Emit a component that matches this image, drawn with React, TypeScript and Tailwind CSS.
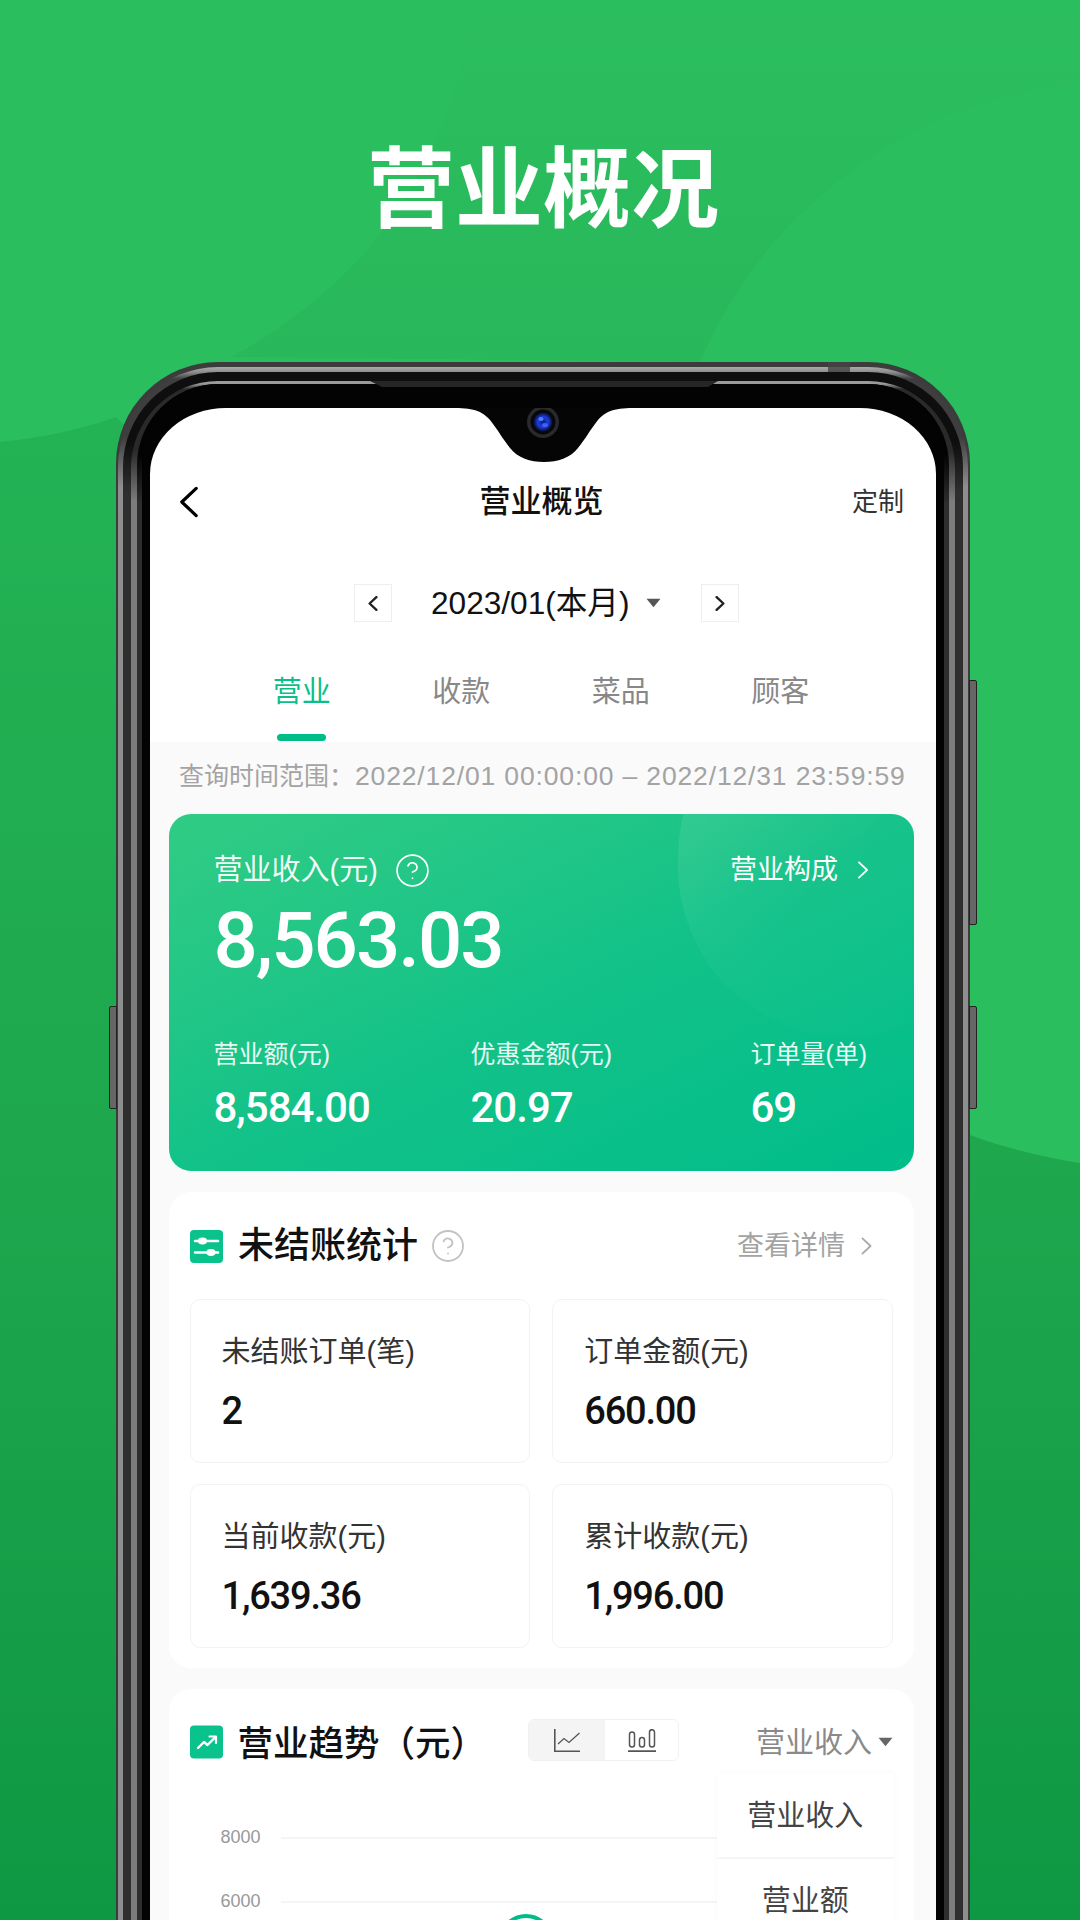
import React from "react";
import { CircleHelp } from "lucide-react";

const Chevron = ({ dir, className, weight = 2 }: { dir: "left" | "right"; className: string; weight?: number }) => (
  <svg viewBox="0 0 12 20" className={className} fill="none" stroke="currentColor" strokeLinecap="round" strokeLinejoin="round">
    <polyline points={dir === "left" ? "10.5,1.5 1.5,10 10.5,18.5" : "1.5,1.5 10.5,10 1.5,18.5"} strokeWidth={weight} />
  </svg>
);

const Caret = ({ className }: { className: string }) => (
  <svg viewBox="0 0 14 9" className={className} fill="currentColor">
    <path d="M0.5 0.5h13L7 8.5z" />
  </svg>
);

const SlidersIcon = () => (
  <svg viewBox="0 0 33 33" className="h-[33px] w-[33px] shrink-0">
    <rect width="33" height="33" rx="4" fill="#0ac28b" />
    <path d="M5 11h23M5 22.5h23" stroke="#fff" strokeWidth="2.6" strokeLinecap="round" />
    <ellipse cx="12.5" cy="11" rx="4.6" ry="3.4" fill="#fff" />
    <ellipse cx="21" cy="22.5" rx="4.6" ry="3.4" fill="#fff" />
  </svg>
);

const TrendIcon = () => (
  <svg viewBox="0 0 33 33" className="h-[34px] w-[33px] shrink-0">
    <rect width="33" height="33" rx="4" fill="#0ac28b" />
    <path d="M8 22.5l6-6 3.5 3L25 12" fill="none" stroke="#fff" strokeWidth="2.4" strokeLinecap="round" strokeLinejoin="round" />
    <path d="M19.5 11H26v6.5" fill="none" stroke="#fff" strokeWidth="2.2" strokeLinecap="round" strokeLinejoin="round" />
  </svg>
);

const LineChartIcon = () => (
  <svg viewBox="0 0 26 23" className="h-[23px] w-[26px]" fill="none" stroke="#555" strokeWidth="1.6">
    <path d="M0.8 0v22.2H26" />
    <path d="M4 15l6-5.5 5 4L25.5 4" strokeWidth="1.3" />
  </svg>
);

const BarChartIcon = () => (
  <svg viewBox="0 0 28 23" className="h-[23px] w-[28px]" fill="none" stroke="#555" strokeWidth="1.5">
    <rect x="1.5" y="3" width="5" height="15" rx="2.5" />
    <rect x="11.5" y="8.5" width="5" height="9.5" rx="2.5" />
    <rect x="21.5" y="0.7" width="5" height="17.3" rx="2.5" />
    <path d="M0 22.2h28" strokeWidth="1.7" />
  </svg>
);

const Background = () => (
  <svg viewBox="0 0 1080 1920" className="absolute inset-0 h-[1920px] w-[1080px]">
    <defs>
      <linearGradient id="bgDark" x1="0" y1="400" x2="0" y2="1920" gradientUnits="userSpaceOnUse">
        <stop offset="0" stopColor="#23b355" />
        <stop offset="0.5" stopColor="#1ea74d" />
        <stop offset="1" stopColor="#0f9843" />
      </linearGradient>
      <linearGradient id="bgBand" x1="0" y1="0" x2="0" y2="420" gradientUnits="userSpaceOnUse">
        <stop offset="0" stopColor="#0a6b35" stopOpacity="0" />
        <stop offset="1" stopColor="#0a6b35" stopOpacity="0.09" />
      </linearGradient>
    </defs>
    <rect width="1080" height="1920" fill="url(#bgDark)" />
    <path d="M0 0H1080V1163C1040 1157 1000 1146 970 1135L500 800L116 417C80 430 40 438 0 442Z" fill="#2bbe5e" />
    <path d="M472 0C458 110 420 190 360 258C320 300 280 330 231 357L700 362C740 270 800 200 895 143C950 110 1020 90 1080 85V0Z" fill="url(#bgBand)" />
  </svg>
);

const Notch = () => (
  <svg viewBox="0 0 786 70" className="absolute left-0 top-0 h-[70px] w-[786px]">
    <defs>
      <radialGradient id="lens">
        <stop offset="0" stopColor="#0b1a80" />
        <stop offset="0.55" stopColor="#1b3fe0" />
        <stop offset="1" stopColor="#070b2c" />
      </radialGradient>
    </defs>
    <path d="M305 0C325 0 333 4 340 12C348 22 352 30 360 40C368 50 380 54 394 54C408 54 420 50 428 40C436 30 440 22 448 12C455 4 463 0 483 0Z" fill="#050505" />
    <circle cx="393" cy="14" r="16" fill="#2a2a2c" />
    <circle cx="393" cy="14" r="12.5" fill="#08080a" />
    <circle cx="393" cy="14" r="9.5" fill="url(#lens)" />
    <ellipse cx="391" cy="11" rx="2.6" ry="2" fill="#4f7dff" />
    <ellipse cx="395" cy="17" rx="3" ry="2" fill="#3a62f5" />
  </svg>
);

const PhoneChrome = () => (
  <>
    <div className="absolute left-[-7px] top-[644px] h-[103px] w-[8px] rounded-l-[2px] border border-[#222] bg-[#666]" />
    <div className="absolute right-[-7px] top-[318px] h-[245px] w-[8px] rounded-r-[2px] border border-[#222] bg-[#666]" />
    <div className="absolute right-[-7px] top-[644px] h-[103px] w-[8px] rounded-r-[2px] border border-[#222] bg-[#666]" />
  </>
);

const StatCell = ({ label, value }: { label: string; value: string }) => (
  <div className="h-[164px] rounded-[10px] border border-[#f3f3f3] pl-[31px] pt-[34px]">
    <div className="text-[29px] leading-[36px] text-[#333]">{label}</div>
    <div className="mt-[19px] font-['Roboto',sans-serif] text-[38px] font-medium leading-[44px] tracking-[-1.2px] text-[#111]">
      {value}
    </div>
  </div>
);

const SubStat = ({ label, value, className }: { label: string; value: string; className: string }) => (
  <div className={className}>
    <div className="text-[25px] leading-[30px] text-white/90">{label}</div>
    <div className="mt-[16px] font-['Roboto',sans-serif] text-[42px] font-medium leading-[46px] tracking-[-1px] text-white">
      {value}
    </div>
  </div>
);

const tabs = ["营业", "收款", "菜品", "顾客"];

const Screen = () => (
  <div className="relative h-[1560px] overflow-hidden rounded-t-[76px_66px] bg-white">
    <Notch />

    <div className="mt-[74px] flex h-[40px] items-center pl-[29px] pr-[32px]">
      <div className="flex-1">
        <Chevron dir="left" className="h-[32px] w-[20px] text-black" />
      </div>
      <div className="text-[31px] font-medium leading-[40px] text-[#111]">营业概览</div>
      <div className="flex-1 text-right text-[26px] leading-[40px] text-[#333]">定制</div>
    </div>

    <div className="mt-[62px] flex h-[38px] items-center pl-[204px]">
      <div className="flex h-[38px] w-[38px] items-center justify-center border border-[#eee]">
        <Chevron dir="left" className="h-[15px] w-[10px] text-[#222]" weight={3.2} />
      </div>
      <div className="ml-[39px] text-[31.6px] leading-[38px] text-[#111]">2023/01(本月)</div>
      <Caret className="ml-[17px] h-[10px] w-[15px] text-[#555]" />
      <div className="ml-[40px] flex h-[38px] w-[38px] items-center justify-center border border-[#eee]">
        <Chevron dir="right" className="h-[15px] w-[10px] text-[#222]" weight={3.2} />
      </div>
    </div>

    <div className="mt-[40px] flex h-[80px] pl-[72px]">
      {tabs.map((tab, i) => (
        <div key={tab} className="flex w-[159.5px] flex-col items-center">
          <div className={`text-[29px] leading-[60px] ${i === 0 ? "text-[#0abf8a]" : "text-[#888]"}`}>{tab}</div>
          {i === 0 && <div className="mt-[12px] h-[7px] w-[49px] rounded-full bg-[#00bd88]" />}
        </div>
      ))}
    </div>

    <div className="bg-[#fafafa] pl-[18.5px] pr-[22px]">
      <div className="flex h-[72px] items-center whitespace-nowrap pb-[2px] pl-[10.5px] text-[25px] text-[#a3a3a3]">
        查询时间范围：
        <span className="ml-[1px] text-[26.5px] tracking-[0.85px]">2022/12/01 00:00:00 – 2022/12/31 23:59:59</span>
      </div>

      <div className="relative h-[357px] overflow-hidden rounded-[22px] bg-gradient-to-br from-[#30cc84] via-[#12c288] to-[#00bd8a] pl-[45px] pt-[38px]">
        <div className="absolute left-[509px] top-[-127px] h-[350px] w-[340px] rounded-full bg-gradient-to-br from-white/[.13] via-white/[.02] to-white/0" />
        <div className="relative flex h-[36px] items-center pr-[45px]">
          <div className="text-[29px] leading-[36px] text-white/95">营业收入(元)</div>
          <CircleHelp className="ml-[16px] h-[37px] w-[37px] text-white" strokeWidth={1.1} />
          <div className="ml-auto text-[27px] leading-[36px] text-white">营业构成</div>
          <Chevron dir="right" className="ml-[19px] h-[18px] w-[12px] text-white" />
        </div>
        <div className="relative mt-[14px] font-['Roboto',sans-serif] text-[78px] font-medium leading-[78px] tracking-[-2px] text-white">
          8,563.03
        </div>
        <div className="relative mt-[59px] flex">
          <SubStat label="营业额(元)" value="8,584.00" className="w-[257px]" />
          <SubStat label="优惠金额(元)" value="20.97" className="w-[280px]" />
          <SubStat label="订单量(单)" value="69" className="w-[140px]" />
        </div>
      </div>

      <div className="mt-[21px] h-[476px] rounded-[22px] bg-white px-[21px] pt-[36px]">
        <div className="flex h-[36px] items-center">
          <SlidersIcon />
          <div className="ml-[15.5px] text-[36px] font-medium leading-[36px] text-[#111]">未结账统计</div>
          <CircleHelp className="ml-[12px] h-[36px] w-[36px] text-[#c2c2c2]" strokeWidth={1.2} />
          <div className="ml-auto text-[27px] leading-[36px] text-[#a3a3a3]">查看详情</div>
          <Chevron dir="right" className="ml-[16px] mr-[21px] h-[18px] w-[11px] text-[#a8a8a8]" />
        </div>
        <div className="mt-[35px] grid grid-cols-2 gap-x-[22px] gap-y-[21px]">
          <StatCell label="未结账订单(笔)" value="2" />
          <StatCell label="订单金额(元)" value="660.00" />
          <StatCell label="当前收款(元)" value="1,639.36" />
          <StatCell label="累计收款(元)" value="1,996.00" />
        </div>
      </div>

      <div className="relative mt-[21px] h-[360px] rounded-t-[22px] bg-white pl-[21px] pr-[21px] pt-[30px]">
        <div className="flex h-[46px] items-center">
          <TrendIcon />
          <div className="ml-[15px] mt-[3px] w-[290.5px] text-[35.5px] font-medium leading-[46px] text-[#111]">营业趋势（元）</div>
          <div className="flex h-[42px] w-[151px] self-start overflow-hidden rounded-[6px] border border-[#f1f1f1]">
            <div className="flex w-[76px] items-center justify-center bg-[#f4f4f4]">
              <LineChartIcon />
            </div>
            <div className="flex flex-1 items-center justify-center">
              <BarChartIcon />
            </div>
          </div>
          <div className="ml-auto mt-[1px] text-[29px] leading-[46px] text-[#8a8a8a]">营业收入</div>
          <Caret className="ml-[6px] h-[10px] w-[15px] text-[#666]" />
        </div>

        <div className="mt-[60px] pl-[31px] text-[18px] leading-[24px] text-[#999]">
          {["8000", "6000"].map((n) => (
            <div key={n} className="flex h-[64px]">
              <div className="w-[60px]">{n}</div>
              <div className="mt-[12px] h-[2px] flex-1 bg-[#f5f5f5]" />
            </div>
          ))}
        </div>

        <div className="absolute left-[329px] top-[225px] h-[56px] w-[56px] rounded-full border-[4px] border-[#00bd88] bg-white" />

        <div className="absolute right-[20px] top-[84px] w-[177.5px] bg-white pt-[1px] text-center text-[29px] leading-[84px] text-[#444] shadow-[0_0_6px_rgba(0,0,0,0.03)]">
          <div className="h-[85px] border-b-2 border-[#f6f6f6]">营业收入</div>
          <div className="h-[85px]">营业额</div>
        </div>
      </div>
    </div>
  </div>
);

const App = () => (
  <div className="relative h-[1920px] w-[1080px] overflow-hidden font-['Liberation_Sans','Noto_Sans_CJK_SC',sans-serif]">
    <Background />
    <div className="relative flex h-[362px] items-center justify-center pl-[6px] pt-[17px] text-[88px] font-semibold leading-none text-white">
      营业概况
    </div>

    <div className="relative ml-[116px] w-[854px]">
      <PhoneChrome />
      {/* bands of the metal frame, nested; the vertical gradients darken them round the corners */}
      <div className="rounded-t-[102px] bg-[#3c3c3c] px-[2px] pt-[5px]">
        <div className="rounded-t-[100px] bg-[linear-gradient(180deg,#ababab_0,#8e8e8e_5px,#3e3e3e_12px,#3e3e3e_70px,#8e8e8e_120px)] px-[5px] pt-[5px]">
          <div className="rounded-t-[95px] bg-[linear-gradient(180deg,#0e0e0e_0,#0e0e0e_70px,#2e2e2e_120px)] px-[8px] pt-[9px]">
            <div className="relative rounded-t-[87px] bg-[linear-gradient(180deg,#9a9a9a_0,#9a9a9a_3px,#2a2a2a_8px,#2a2a2a_70px,#7c7c7c_120px)] px-[6px] pt-[3px]">
              <div className="rounded-t-[81px] bg-[linear-gradient(180deg,#030303_0,#030303_70px,#2e2e2e_120px)] px-[5px]">
                <div className="rounded-t-[76px] bg-[#030303] px-[8px] pt-[24px]">
                  <Screen />
                </div>
              </div>
            </div>
          </div>
        </div>
        <div className="absolute left-[712px] top-0 h-[10px] w-[22px] bg-[#444]/80" />
        <svg viewBox="0 0 348 6" className="absolute left-[254px] top-[19px] h-[6px] w-[348px]">
          <path d="M0 0H348L338 6H12Z" fill="#262626" />
        </svg>
      </div>
    </div>
  </div>
);

export default App;
